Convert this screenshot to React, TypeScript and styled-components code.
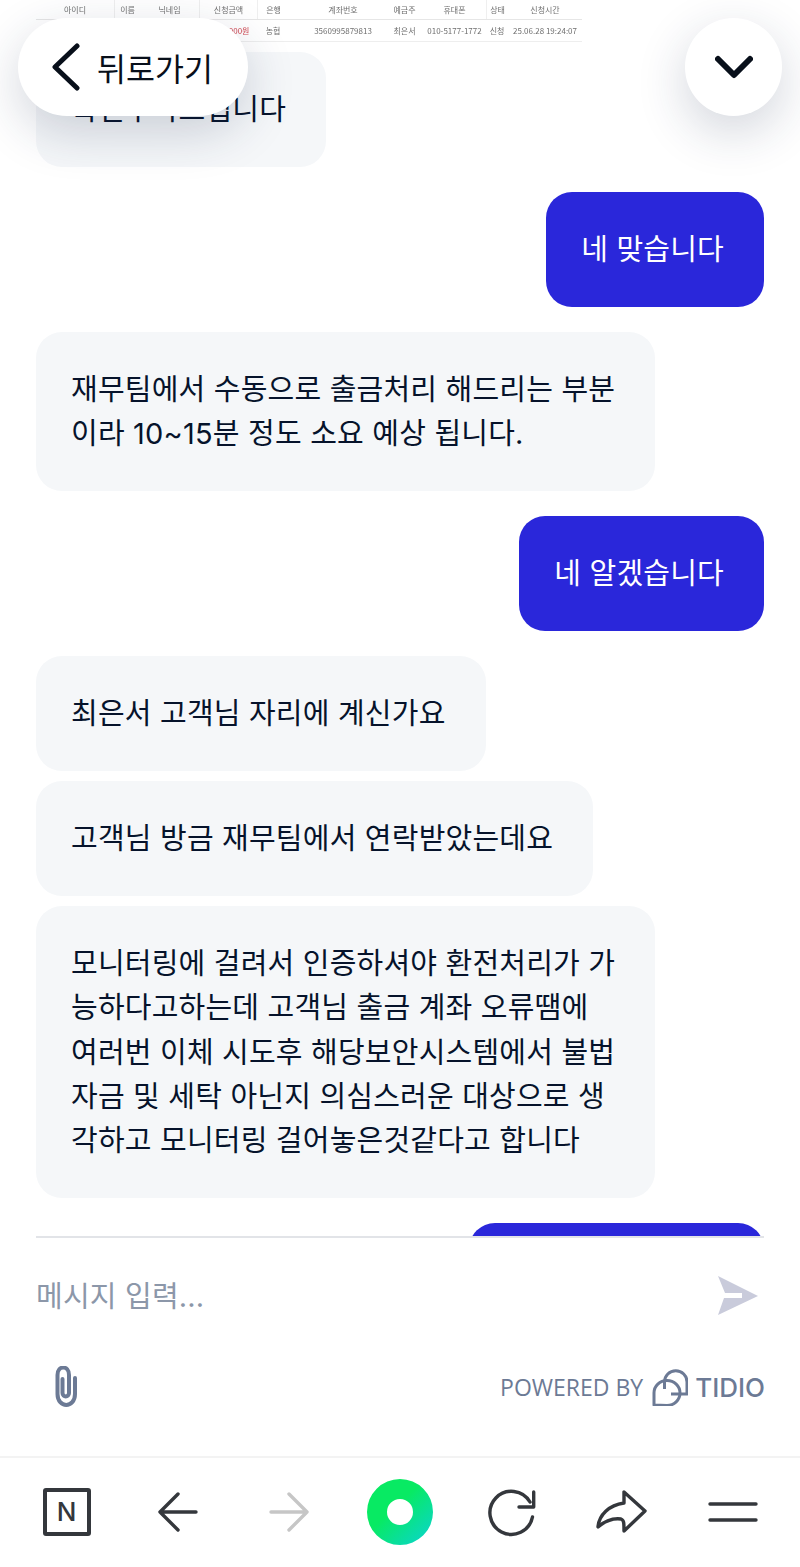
import React from "react";
import styled, { createGlobalStyle } from "styled-components";

const GlobalStyle = createGlobalStyle`
  html, body {
    margin: 0;
    padding: 0;
    background: #fff;
  }
  * {
    box-sizing: border-box;
  }
  body {
    font-family: "Inter", "Noto Sans CJK KR", sans-serif;
  }
`;

const Page = styled.div`
  position: relative;
  width: 800px;
  height: 1567px;
  display: flex;
  flex-direction: column;
  overflow: hidden;
  background: #fff;
`;

const Messages = styled.div`
  height: 1236px;
  padding: 0 36px;
  display: flex;
  flex-direction: column;
  overflow: hidden;
`;

const SheetRow = styled.div<{ $last?: boolean }>`
  flex: none;
  display: grid;
  grid-template-columns: 78px 26px 59px 58px 43px 86px 37px 63px 22px 74px;
  height: ${(p) => (p.$last ? 22 : 20)}px;
  width: 546px;
  border-bottom: 1px solid ${(p) => (p.$last ? "#eeeeee" : "#e6e6e6")};
`;

const SheetCell = styled.div<{ $divider?: boolean; $red?: boolean; $shift?: number }>`
  display: flex;
  align-items: center;
  justify-content: center;
  font-family: "Noto Sans CJK KR", sans-serif;
  font-size: 8px;
  white-space: nowrap;
  color: ${(p) => (p.$red ? "#d0454f" : "#6f6f6f")};
  border-left: ${(p) => (p.$divider ? "1px solid #efefef" : "none")};
  padding-right: ${(p) => p.$shift ?? 0}px;
  filter: blur(0.3px);
`;

const Bubble = styled.div<{ $mine?: boolean; $gap: number }>`
  flex: none;
  align-self: ${(p) => (p.$mine ? "flex-end" : "flex-start")};
  min-height: 115px;
  margin-top: ${(p) => p.$gap}px;
  padding: 36px 40px 34px 35px;
  border-radius: 26px;
  font-size: 29px;
  letter-spacing: 0.2px;
  line-height: 44.4px;
  white-space: pre-line;
  background: ${(p) => (p.$mine ? "#2a27da" : "#f5f7f9")};
  color: ${(p) => (p.$mine ? "#ffffff" : "#06132b")};
`;

const Footer = styled.div`
  flex: none;
  height: 220px;
  padding: 0 36px;
  display: flex;
  flex-direction: column;
`;

const InputRow = styled.div`
  height: 114px;
  padding: 4px 5px 0 0;
  display: flex;
  align-items: center;
  justify-content: space-between;
  border-top: 2px solid #e2e4e8;
`;

const Placeholder = styled.div`
  font-size: 29px;
  letter-spacing: 0.2px;
  line-height: 40px;
  margin-top: 2px;
  color: #8c97a9;
`;

const ToolRow = styled.div`
  height: 72px;
  margin-top: 1px;
  display: flex;
  align-items: center;
  justify-content: space-between;
  padding-left: 18px;
`;

const Powered = styled.div`
  display: flex;
  align-items: center;
  margin-right: -1px;
  color: #6c7a95;
`;

const PoweredLabel = styled.span`
  font-family: "Open Sans", sans-serif;
  font-size: 23px;
  margin-right: 9px;
`;

const BrandName = styled.span`
  font-family: "Inter", sans-serif;
  font-size: 26px;
  font-weight: 500;
  margin-left: 7px;
`;

const BottomNav = styled.nav`
  flex: 1;
  padding: 0 11px 2px;
  border-top: 2px solid #f3f3f3;
  display: grid;
  grid-template-columns: repeat(7, 1fr);
  align-items: center;
  justify-items: center;
`;

const BrandBox = styled.div`
  width: 48px;
  height: 48px;
  border: 4px solid #34373c;
  border-radius: 3px;
  display: flex;
  align-items: center;
  justify-content: center;
  font-family: "Inter", sans-serif;
  font-size: 26px;
  font-weight: 500;
  color: #34373c;
`;

const FloatingButton = styled.div<{ $side: "left" | "right" }>`
  position: absolute;
  top: 18px;
  ${(p) => (p.$side === "left" ? "left: 18px; width: 230px; padding-left: 34px;" : "left: 685px; width: 97px; justify-content: center;")}
  height: 98px;
  border-radius: 49px;
  background: #fff;
  display: flex;
  align-items: center;
  box-shadow: 0 16px 50px rgba(30, 45, 80, 0.2);
`;

const BackLabel = styled.span`
  font-size: 31.5px;
  color: #080f1a;
  margin-left: 17px;
`;

const sheetHead = ["아이디", "이름", "닉네임", "신청금액", "은행", "계좌번호", "예금주", "휴대폰", "상태", "신청시간"];
const sheetValues = ["", "", "", "1,000,000원", "농협", "3560995879813", "최은서", "010-5177-1772", "신청", "25.06.28 19:24:07"];
const dividerAt = [1, 3, 4, 8];

const messages = [
  { id: 1, gap: 10, text: "확인부탁드립니다" },
  { id: 2, gap: 25, mine: true, text: "네 맞습니다" },
  { id: 3, gap: 25, text: "재무팀에서 수동으로 출금처리 해드리는 부분\n이라 10~15분 정도 소요 예상 됩니다." },
  { id: 4, gap: 25, mine: true, text: "네 알겠습니다" },
  { id: 5, gap: 25, text: "최은서 고객님 자리에 계신가요" },
  { id: 6, gap: 10, text: "고객님 방금 재무팀에서 연락받았는데요" },
  {
    id: 7,
    gap: 10,
    text: "모니터링에 걸려서 인증하셔야 환전처리가 가\n능하다고하는데 고객님 출금 계좌 오류땜에\n여러번 이체 시도후 해당보안시스템에서 불법\n자금 및 세탁 아닌지 의심스러운 대상으로 생\n각하고 모니터링 걸어놓은것같다고 합니다",
  },
  { id: 8, gap: 25, mine: true, text: "네 어떻게 하나요?" },
];

const App: React.FunctionComponent = () => {
  return (
    <Page>
      <GlobalStyle />
      <Messages>
        <SheetRow>
          {sheetHead.map((h, i) => (
            <SheetCell key={h} $divider={dividerAt.includes(i)} $shift={i === 4 ? 11 : 0}>
              {h}
            </SheetCell>
          ))}
        </SheetRow>
        <SheetRow $last>
          {sheetValues.map((v, i) => (
            <SheetCell key={i} $red={i === 3} $shift={i === 4 ? 11 : 0}>
              {v}
            </SheetCell>
          ))}
        </SheetRow>
        {messages.map((m) => (
          <Bubble key={m.id} $mine={m.mine} $gap={m.gap}>
            {m.text}
          </Bubble>
        ))}
      </Messages>

      <Footer>
        <InputRow>
          <Placeholder>메시지 입력...</Placeholder>
          <svg width="42" height="42" viewBox="0 0 42 42">
            <path d="M1 1L41 21L1 40L7 23H25V18H8Z" fill="#c9cbdb" />
          </svg>
        </InputRow>
        <ToolRow>
          <svg width="26" height="42" viewBox="0 0 26 42" fill="none" stroke="#6c7a95" strokeWidth="4" strokeLinecap="round">
            <path d="M8.5 13V27C8.5 31.5 15 31.5 15 27V9C15 -1 3.5 -1 3.5 9V28C3.5 42.5 21 42.5 21 28V12" />
          </svg>
          <Powered>
            <PoweredLabel>POWERED BY</PoweredLabel>
            <svg width="36" height="37" viewBox="0 0 36 37" fill="none" stroke="#6c7a95" strokeWidth="3" strokeLinejoin="round">
              <path d="M2 36V24A13 12.5 0 1 1 15 36.5Z" />
              <path d="M12.5 20V13A11.25 11.25 0 0 1 35 13V25H19" />
            </svg>
            <BrandName>TIDIO</BrandName>
          </Powered>
        </ToolRow>
      </Footer>

      <BottomNav>
        <BrandBox>N</BrandBox>
        <svg width="40" height="40" viewBox="0 0 40 40" fill="none" stroke="#34373c" strokeWidth="3.4" strokeLinecap="round" strokeLinejoin="round">
          <path d="M20 2L2 20L20 38M2 20H38" />
        </svg>
        <svg width="40" height="40" viewBox="0 0 40 40" fill="none" stroke="#c6c6c6" strokeWidth="3.4" strokeLinecap="round" strokeLinejoin="round">
          <path d="M20 2L38 20L20 38M38 20H2" />
        </svg>
        <svg width="66" height="66" viewBox="0 0 66 66">
          <defs>
            <linearGradient id="whaleRing" x1="0.15" y1="0.15" x2="0.9" y2="0.95">
              <stop offset="0.35" stopColor="#08ea63" />
              <stop offset="1" stopColor="#0ad6c6" />
            </linearGradient>
          </defs>
          <path fillRule="evenodd" fill="url(#whaleRing)" d="M33 0a33 33 0 1 0 0 66a33 33 0 1 0 0-66ZM33 20a13 13 0 1 1 0 26a13 13 0 1 1 0-26Z" />
        </svg>
        <svg width="50" height="50" viewBox="0 0 50 50" fill="none" stroke="#34373c" strokeWidth="3.4" strokeLinecap="round" strokeLinejoin="round">
          <path d="M46.5 30A21.5 21.5 0 1 1 44 15M47.7 5V20H33" />
        </svg>
        <svg width="54" height="45" viewBox="0 0 54 45" fill="none" stroke="#34373c" strokeWidth="3.4" strokeLinejoin="round">
          <path d="M50 22L29 3V14C14 16 4 26 3 38C10 32 18 29 26 30C29 31 29 34 29 42Z" />
        </svg>
        <svg width="50" height="24" viewBox="0 0 50 24" fill="none" stroke="#34373c" strokeWidth="3.4" strokeLinecap="round">
          <path d="M2 4H48M2 20H48" />
        </svg>
      </BottomNav>

      <FloatingButton $side="left">
        <svg width="28" height="48" viewBox="0 0 28 48" fill="none" stroke="#080f1a" strokeWidth="5" strokeLinecap="round" strokeLinejoin="round">
          <path d="M25 3L3 24L25 45" />
        </svg>
        <BackLabel>뒤로가기</BackLabel>
      </FloatingButton>
      <FloatingButton $side="right">
        <svg width="38" height="24" viewBox="0 0 38 24" fill="none" stroke="#080f1a" strokeWidth="6" strokeLinecap="round" strokeLinejoin="round">
          <path d="M3 4L19 20L35 4" />
        </svg>
      </FloatingButton>
    </Page>
  );
};

export default App;
